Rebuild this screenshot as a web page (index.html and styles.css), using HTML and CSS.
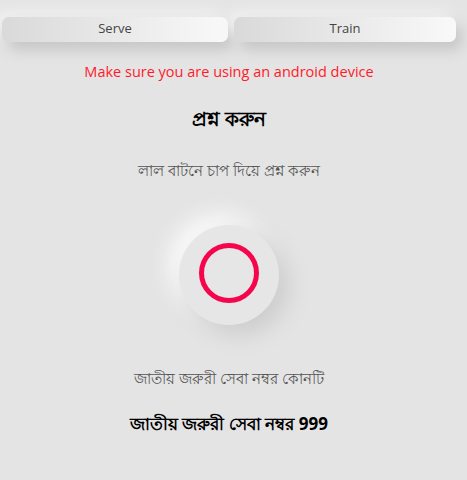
FILE: index.html
```html
<!DOCTYPE html>
<html>
<head>
<meta charset="utf-8">
<link rel="stylesheet" href="styles.css">
</head>
<body>
<div class="page">
  <div class="tabs">
    <button class="tab">Serve</button>
    <button class="tab">Train</button>
  </div>
  <p class="warn">Make sure you are using an android device</p>
  <h2 class="title">প্রশ্ন করুন</h2>
  <p class="hint">লাল বাটনে চাপ দিয়ে প্রশ্ন করুন</p>
  <div class="mic-wrap">
    <div class="mic"><span class="ring"></span></div>
  </div>
  <p class="question">জাতীয় জরুরী সেবা নম্বর কোনটি</p>
  <h2 class="answer">জাতীয় জরুরী সেবা নম্বর 999</h2>
</div>
</body>
</html>
```
FILE: styles.css
```css
html, body {
  margin: 0;
  padding: 0;
  background: #e4e4e4;
  height: 100%;
}
body {
  font-family: "Open Sans", "Noto Sans", sans-serif;
}
.page {
  width: 454px;
  padding: 17px 9px 0 2px;
  display: flex;
  flex-direction: column;
  align-items: center;
}
.tabs {
  width: 454px;
  display: grid;
  grid-template-columns: 226px 222px;
  gap: 6px;
}
.tab {
  height: 25px;
  border: none;
  border-radius: 7px;
  background: linear-gradient(90deg, #d9d9d9, #f9f9f9);
  box-shadow: 6px 8px 14px #c6c6c6, -6px -6px 14px #f2f2f2;
  font-family: "Open Sans", "Noto Sans", sans-serif;
  font-size: 13px;
  line-height: 20px;
  color: #444;
  padding: 0 0 3px;
}
.warn {
  margin: 20px 0 0;
  color: #ff1a2a;
  font-size: 14.5px;
  line-height: 20px;
}
.title {
  margin: 25px 0 0;
  font-size: 19.5px;
  line-height: 24px;
  font-weight: bold;
  color: #000;
}
.hint {
  margin: 27px 0 0;
  font-size: 15px;
  line-height: 24px;
  color: #555;
}
.mic-wrap {
  margin-top: 43px;
  display: flex;
  justify-content: center;
}
.mic {
  width: 100px;
  height: 100px;
  border-radius: 50%;
  background: #e6e6e6;
  box-shadow: 10px 10px 22px #cdcdcd, -10px -10px 22px #fbfbfb;
  display: flex;
  align-items: center;
  justify-content: center;
}
.ring {
  width: 50px;
  height: 50px;
  border-radius: 50%;
  border: 5px solid #f5064c;
  margin-top: -4px;
}
.question {
  margin: 41px 0 0;
  font-size: 15px;
  line-height: 24px;
  color: #555;
}
.answer {
  margin: 22px 0 0;
  font-size: 17px;
  line-height: 24px;
  font-weight: bold;
  color: #000;
}
```
